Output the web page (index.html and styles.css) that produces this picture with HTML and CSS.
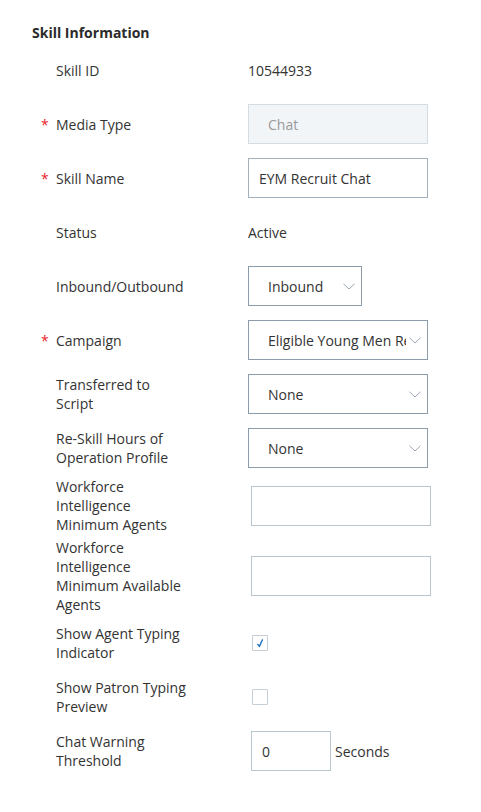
FILE: index.html
```html
<!DOCTYPE html>
<html>
<head>
<meta charset="utf-8">
<link rel="stylesheet" href="styles.css">
</head>
<body>
<div class="panel">
  <div class="title">Skill Information</div>

  <div class="row">
    <span class="req"></span>
    <span class="label">Skill ID</span>
    <span class="value">10544933</span>
  </div>

  <div class="row">
    <span class="req">*</span>
    <span class="label">Media Type</span>
    <div class="box disabled"><span class="txt">Chat</span></div>
  </div>

  <div class="row">
    <span class="req">*</span>
    <span class="label">Skill Name</span>
    <div class="box textbox"><span class="txt">EYM Recruit Chat</span></div>
  </div>

  <div class="row">
    <span class="req"></span>
    <span class="label">Status</span>
    <span class="value">Active</span>
  </div>

  <div class="row">
    <span class="req"></span>
    <span class="label">Inbound/Outbound</span>
    <div class="box select narrow"><span class="txt">Inbound</span><svg class="chev" width="12" height="7" viewBox="0 0 12 7"><path d="M0.5 0.8 L6 6 L11.5 0.8" fill="none" stroke="#9aa7b4" stroke-width="1"/></svg></div>
  </div>

  <div class="row">
    <span class="req">*</span>
    <span class="label">Campaign</span>
    <div class="box select"><span class="txt">Eligible Young Men Recruit Campaign</span><svg class="chev" width="12" height="7" viewBox="0 0 12 7"><path d="M0.5 0.8 L6 6 L11.5 0.8" fill="none" stroke="#9aa7b4" stroke-width="1"/></svg></div>
  </div>

  <div class="row">
    <span class="req"></span>
    <span class="label">Transferred to Script</span>
    <div class="box select"><span class="txt">None</span><svg class="chev" width="12" height="7" viewBox="0 0 12 7"><path d="M0.5 0.8 L6 6 L11.5 0.8" fill="none" stroke="#9aa7b4" stroke-width="1"/></svg></div>
  </div>

  <div class="row">
    <span class="req"></span>
    <span class="label">Re-Skill Hours of Operation Profile</span>
    <div class="box select"><span class="txt">None</span><svg class="chev" width="12" height="7" viewBox="0 0 12 7"><path d="M0.5 0.8 L6 6 L11.5 0.8" fill="none" stroke="#9aa7b4" stroke-width="1"/></svg></div>
  </div>

  <div class="row">
    <span class="req"></span>
    <span class="label">Workforce Intelligence Minimum Agents</span>
    <div class="box input"></div>
  </div>

  <div class="row">
    <span class="req"></span>
    <span class="label">Workforce Intelligence Minimum Available Agents</span>
    <div class="box input"></div>
  </div>

  <div class="row">
    <span class="req"></span>
    <span class="label">Show Agent Typing Indicator</span>
    <span class="check"><svg width="14" height="14" viewBox="0 0 14 14"><path d="M4.8 8.4 L6.4 10.4 L9.4 3.8" fill="none" stroke="#1e6fc2" stroke-width="1.4" stroke-linecap="round" stroke-linejoin="round"/></svg></span>
  </div>

  <div class="row">
    <span class="req"></span>
    <span class="label">Show Patron Typing Preview</span>
    <span class="check"></span>
  </div>

  <div class="row">
    <span class="req"></span>
    <span class="label">Chat Warning Threshold</span>
    <div class="box input short"><span class="txt">0</span></div>
    <span class="unit">Seconds</span>
  </div>
</div>
</body>
</html>
```

FILE: styles.css
```css
html, body {
  margin: 0;
  padding: 0;
  background: #ffffff;
}

body {
  font-family: "Open Sans", "Liberation Sans", sans-serif;
  font-size: 14px;
  line-height: 19px;
  color: #333333;
}

.panel {
  padding: 23px 0 0 32px;
}

.title {
  font-weight: 700;
  color: #2b2b2b;
  margin-bottom: 8px;
}

.row {
  display: flex;
  align-items: center;
  min-height: 40px;
  margin-bottom: 14px;
}

.req {
  flex: 0 0 24px;
  box-sizing: border-box;
  padding-left: 9px;
  color: #e8262b;
  align-self: center;
}

.label {
  flex: 0 0 132px;
  margin: -5px 60px -5px 0;
}

.value {
  color: #333333;
}

.box {
  box-sizing: border-box;
  width: 180px;
  height: 40px;
  display: flex;
  align-items: center;
  background: #ffffff;
}

.box .txt {
  flex: 1 1 auto;
  min-width: 0;
  overflow: hidden;
  white-space: nowrap;
}

.disabled {
  background: #f1f5f8;
  border: 1px solid #d2dce2;
  color: #9a9a9a;
  padding-left: 19px;
}

.textbox {
  border: 1px solid #a3b1bd;
  padding-left: 10px;
}

.select {
  border: 1px solid #8d9cab;
  padding-left: 19px;
}

.select.narrow {
  width: 114px;
}

.chev {
  flex: 0 0 12px;
  margin: 0 6px 0 3px;
}

.input {
  border: 1px solid #bac6cd;
  margin-left: 3px;
  padding-left: 10px;
}

.input.short {
  width: 80px;
}

.unit {
  margin-left: 4px;
}

.check {
  box-sizing: border-box;
  width: 16px;
  height: 16px;
  margin-left: 4px;
  border: 1px solid #c6cfd6;
  border-radius: 1px;
  display: flex;
  align-items: center;
  justify-content: center;
}

.check svg {
  display: block;
}
```
